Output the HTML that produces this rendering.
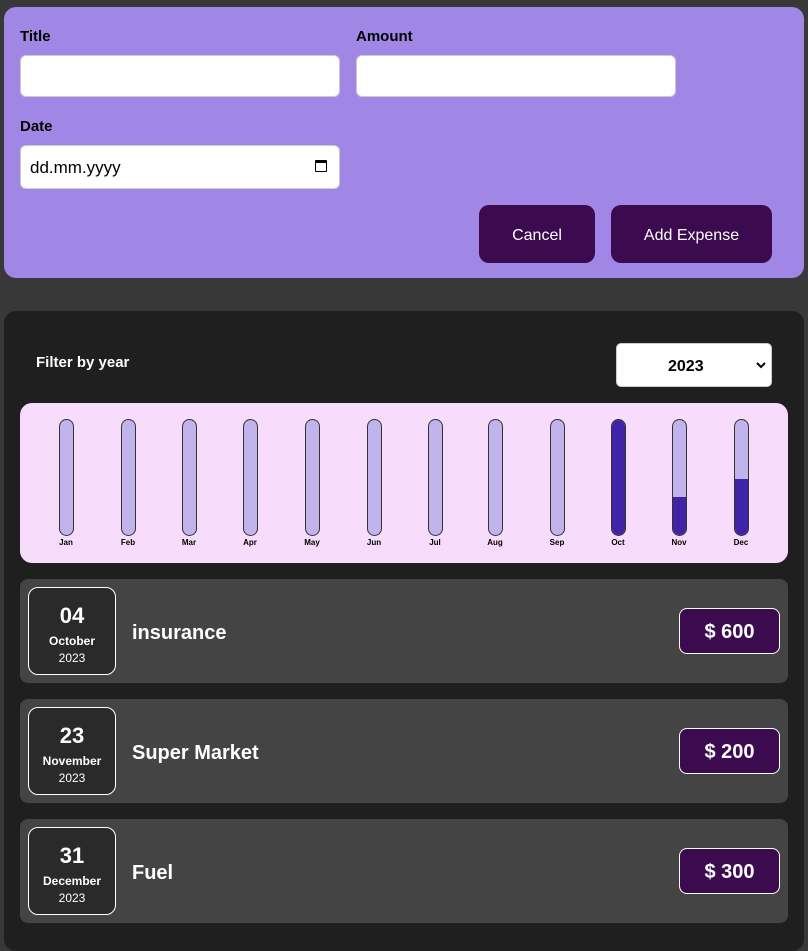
<!DOCTYPE html>
<html><head><style>
*{box-sizing:border-box;margin:0;padding:0}
body{width:808px;height:939px;background:#383838;font-family:"Liberation Sans",sans-serif;position:relative;overflow:hidden}
.a{position:absolute}
.top{left:4px;top:7px;width:800px;height:271px;background:#a087e6;border-radius:12px}
.lbl{font-weight:bold;font-size:15px;color:#000}
.inp{background:#fff;border:1px solid #ccc;border-radius:6px}
.btn{background:#3b0a4f;color:#fff;border-radius:10px;font-size:16px;display:flex;align-items:center;justify-content:center;padding-top:4px}
.low{left:4px;top:311px;width:800px;height:640px;background:#1f1f1f;border-radius:12px}
.chart{left:20px;top:403px;width:768px;height:160px;background:#f7dcfc;border-radius:12px}
.bar{width:15px;height:117px;top:419px;background:#c1b3ec;border:1px solid #333;border-radius:8px;overflow:hidden}
.bar i{position:absolute;left:0;right:0;bottom:0;background:#4123a8}
.ml{top:538px;font-size:8px;font-weight:bold;color:#000;width:40px;text-align:center}
.item{left:20px;width:768px;height:104px;background:#444;border-radius:8px}
.date{left:8px;top:8px;width:88px;height:88px;background:#2a2a2a;border:1px solid #fff;border-radius:10px;color:#fff;text-align:center}
.d1{font-size:22px;font-weight:bold;margin-top:14px;line-height:28px}
.d2{font-size:12px;font-weight:bold;line-height:18px;margin-top:2px}
.d3{font-size:12px;line-height:16px}
.tt{left:112px;top:43px;font-size:20px;font-weight:bold;color:#fff}
.amt{left:659px;top:29px;width:101px;height:46px;background:#3b0a4f;border:1px solid #fff;border-radius:8px;color:#fff;font-size:20px;font-weight:bold;display:flex;align-items:center;justify-content:center;padding-top:3px}
</style></head><body>
<div class="a top"></div>
<div class="a lbl" style="left:20px;top:28px">Title</div>
<div class="a lbl" style="left:356px;top:28px">Amount</div>
<div class="a inp" style="left:20px;top:55px;width:320px;height:42px"></div>
<div class="a inp" style="left:356px;top:55px;width:320px;height:42px"></div>
<div class="a lbl" style="left:20px;top:118px">Date</div>
<div class="a inp" style="left:20px;top:145px;width:320px;height:44px"></div>
<div class="a" style="left:30px;top:158px;font-size:17px;color:#000">dd.mm.yyyy</div>
<div class="a" style="left:315px;top:160px;width:12px;height:12px;border:1.5px solid #000;border-top-width:3px;border-radius:1px"></div>
<div class="a btn" style="left:479px;top:205px;width:116px;height:58px">Cancel</div>
<div class="a btn" style="left:611px;top:205px;width:161px;height:58px">Add Expense</div>

<div class="a low"></div>
<div class="a" style="left:36px;top:354px;color:#fff;font-weight:bold;font-size:15px">Filter by year</div>
<div class="a" style="left:616px;top:343px;width:156px;height:44px;background:#fff;border:1px solid #ccc;border-radius:5px"></div>
<div class="a" style="left:668px;top:358px;font-weight:bold;font-size:16px">2023</div>
<svg class="a" style="left:756px;top:361px" width="10" height="8"><path d="M1 2 L5 6 L9 2" stroke="#000" stroke-width="2" fill="none"/></svg>

<div class="a chart"></div>
<div class="a bar" style="left:59px"></div><div class="a ml" style="left:46px">Jan</div>
<div class="a bar" style="left:121px"></div><div class="a ml" style="left:108px">Feb</div>
<div class="a bar" style="left:182px"></div><div class="a ml" style="left:169px">Mar</div>
<div class="a bar" style="left:243px"></div><div class="a ml" style="left:230px">Apr</div>
<div class="a bar" style="left:305px"></div><div class="a ml" style="left:292px">May</div>
<div class="a bar" style="left:367px"></div><div class="a ml" style="left:354px">Jun</div>
<div class="a bar" style="left:428px"></div><div class="a ml" style="left:415px">Jul</div>
<div class="a bar" style="left:488px"></div><div class="a ml" style="left:475px">Aug</div>
<div class="a bar" style="left:550px"></div><div class="a ml" style="left:537px">Sep</div>
<div class="a bar" style="left:611px"><i style="top:0"></i></div><div class="a ml" style="left:598px">Oct</div>
<div class="a bar" style="left:672px"><i style="height:33%"></i></div><div class="a ml" style="left:659px">Nov</div>
<div class="a bar" style="left:734px"><i style="height:49%"></i></div><div class="a ml" style="left:721px">Dec</div>

<div class="a item" style="top:579px">
<div class="a date"><div class="d1">04</div><div class="d2">October</div><div class="d3">2023</div></div>
<div class="a tt">insurance</div><div class="a amt">$ 600</div></div>
<div class="a item" style="top:699px">
<div class="a date"><div class="d1">23</div><div class="d2">November</div><div class="d3">2023</div></div>
<div class="a tt">Super Market</div><div class="a amt">$ 200</div></div>
<div class="a item" style="top:819px">
<div class="a date"><div class="d1">31</div><div class="d2">December</div><div class="d3">2023</div></div>
<div class="a tt">Fuel</div><div class="a amt">$ 300</div></div>
</body></html>
